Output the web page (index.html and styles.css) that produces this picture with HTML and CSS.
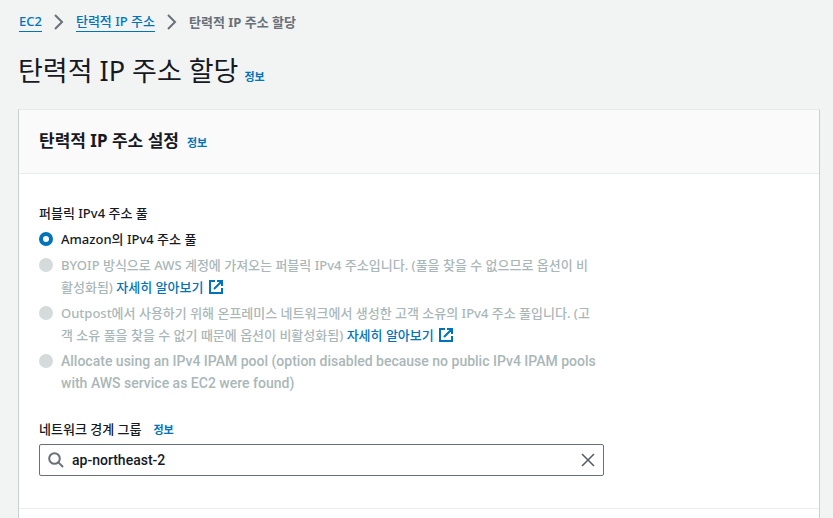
FILE: index.html
```html
<!DOCTYPE html>
<html lang="ko">
<head>
    <meta charset="UTF-8">
    <meta name="viewport" content="width=device-width, initial-scale=1.0">
    <title>탄력적 IP 주소 할당</title>
    <link rel="stylesheet" href="styles.css">
</head>
<body>
    <nav class="breadcrumb">
        <a href="#">EC2</a>
        <svg class="chevron" viewBox="0 0 10 16"><path d="M1 1l7 7-7 7"/></svg>
        <a href="#">탄력적 IP 주소</a>
        <svg class="chevron" viewBox="0 0 10 16"><path d="M1 1l7 7-7 7"/></svg>
        <span class="current">탄력적 IP 주소 할당</span>
    </nav>

    <header class="page-header">
        <h1>탄력적 IP 주소 할당</h1>
        <a href="#" class="info">정보</a>
    </header>

    <form class="card">
        <div class="card-header">
            <h2>탄력적 IP 주소 설정</h2>
            <a href="#" class="info">정보</a>
        </div>

        <div class="card-body">
            <!-- Address pool -->
            <fieldset class="pool">
                <legend>퍼블릭 IPv4 주소 풀</legend>
                <div class="option">
                    <input type="radio" name="pool" id="pool-amazon" checked>
                    <label for="pool-amazon">Amazon의 IPv4 주소 풀</label>
                </div>
                <div class="option">
                    <input type="radio" name="pool" id="pool-byoip" disabled>
                    <label for="pool-byoip">BYOIP 방식으로 AWS 계정에 가져오는 퍼블릭 IPv4 주소입니다. (풀을 찾을 수 없으므로 옵션이 비<br>활성화됨) <a href="#" class="learn-more">자세히 알아보기 <svg class="external" viewBox="0 0 14 14"><path d="M6 1H1v12h12V8M8 1h5v5M13 1L5 9"/></svg></a></label>
                </div>
                <div class="option">
                    <input type="radio" name="pool" id="pool-outpost" disabled>
                    <label for="pool-outpost">Outpost에서 사용하기 위해 온프레미스 네트워크에서 생성한 고객 소유의 IPv4 주소 풀입니다. (고<br>객 소유 풀을 찾을 수 없기 때문에 옵션이 비활성화됨) <a href="#" class="learn-more">자세히 알아보기 <svg class="external" viewBox="0 0 14 14"><path d="M6 1H1v12h12V8M8 1h5v5M13 1L5 9"/></svg></a></label>
                </div>
                <div class="option">
                    <input type="radio" name="pool" id="pool-ipam" disabled>
                    <label for="pool-ipam" class="latin">Allocate using an IPv4 IPAM pool (option disabled because no public IPv4 IPAM pools with AWS service as EC2 were found)</label>
                </div>
            </fieldset>

            <!-- Border group -->
            <div class="field">
                <div class="field-label">
                    <label for="border-group">네트워크 경계 그룹</label>
                    <a href="#" class="info">정보</a>
                </div>
                <div class="search-box">
                    <svg class="search-icon" viewBox="0 0 16 16"><circle cx="6.5" cy="6.5" r="5.3"/><path d="M10.4 10.4l4.6 4.6"/></svg>
                    <input type="text" id="border-group" class="latin" value="ap-northeast-2">
                    <button type="button" class="clear" aria-label="지우기">
                        <svg viewBox="0 0 14 14"><path d="M1 1l12 12M13 1L1 13"/></svg>
                    </button>
                </div>
            </div>
        </div>
        <div class="card-next"></div>
    </form>
</body>
</html>
```
FILE: styles.css
```css
/* General Styles */
* {
    box-sizing: border-box;
}

body {
    margin: 0;
    padding: 11px 13px 0 18px;
    height: 100vh;
    overflow: hidden;
    display: flex;
    flex-direction: column;
    background: #f2f3f3;
    color: #16191f;
    font-family: "Noto Sans", "Noto Sans CJK KR", sans-serif;
    font-size: 13px;
    font-weight: 500;
    line-height: 22px;
}

a {
    color: #0073bb;
    text-decoration: none;
}

svg {
    fill: none;
    stroke: currentColor;
}

h1,
h2 {
    margin: 0;
}

/* Breadcrumb */
.breadcrumb {
    display: flex;
    align-items: center;
    gap: 12px;
    padding-left: 1px;
    line-height: 20px;
}

.breadcrumb a {
    border-bottom: 1px solid #0073bb;
}

.breadcrumb .current {
    color: #687078;
    font-weight: bold;
}

.chevron {
    width: 10px;
    height: 16px;
    color: #687078;
    stroke-width: 2;
}

/* Headings */
.page-header {
    display: flex;
    align-items: baseline;
    gap: 6px;
    padding: 21px 0 20px;
}

.page-header h1 {
    font-size: 27px;
    font-weight: normal;
    line-height: 36px;
}

.info {
    font-size: 11px;
    font-weight: bold;
}

/* Card */
.card {
    flex: 1 0 auto;
    display: flex;
    flex-direction: column;
    background: #fff;
    border: 1px solid #c8d0d0;
    border-top-color: #e6eaea;
    border-bottom: none;
}

.card-header {
    display: flex;
    align-items: baseline;
    gap: 8px;
    padding: 19px 20px;
    background: #fafafa;
    border-bottom: 1px solid #eaeded;
}

.card-header h2 {
    font-size: 17px;
    line-height: 24px;
}

.card-body {
    padding: 28px 20px 32px;
}

.card-next {
    flex: 1;
    border-top: 1px solid #eaeded;
}

/* Options */
.pool {
    max-width: 565px;
    margin: 0 0 20px;
    padding: 0;
    border: none;
}

.pool legend {
    padding: 0;
    margin-bottom: 4px;
}

.option {
    display: flex;
    align-items: flex-start;
    gap: 8px;
    margin-bottom: 4px;
}

.option input {
    appearance: none;
    flex: none;
    width: 14px;
    height: 14px;
    margin: 4px 0;
    border: 4px solid #0073bb;
    border-radius: 50%;
    background: #fff;
}

.option input:disabled {
    border-color: #d5dbdb;
    background: #d5dbdb;
}

.option input:disabled + label {
    color: #aab7b8;
}

.option .latin,
.search-box .latin {
    font-family: Roboto, "Noto Sans CJK KR", sans-serif;
    font-size: 14px;
}

.learn-more {
    white-space: nowrap;
}

.external {
    width: 14px;
    height: 14px;
    margin-left: 2px;
    vertical-align: -2px;
    stroke-width: 2;
}

/* Search field */
.field {
    max-width: 565px;
}

.field-label {
    display: flex;
    align-items: baseline;
    gap: 12px;
    margin-bottom: 3px;
}

.search-box {
    display: flex;
    align-items: center;
    gap: 8px;
    height: 32px;
    padding: 0 8px;
    border: 1px solid #687078;
    border-radius: 2px;
}

.search-box input {
    flex: 1;
    min-width: 0;
    padding: 0;
    border: none;
    outline: none;
    background: transparent;
    color: inherit;
    font: inherit;
}

.search-icon {
    width: 16px;
    height: 16px;
    color: #687078;
    stroke-width: 2;
}

.clear {
    display: flex;
    padding: 0;
    border: none;
    background: none;
    color: #545b64;
    cursor: pointer;
}

.clear svg {
    width: 14px;
    height: 14px;
    stroke-width: 1.5;
}
```
